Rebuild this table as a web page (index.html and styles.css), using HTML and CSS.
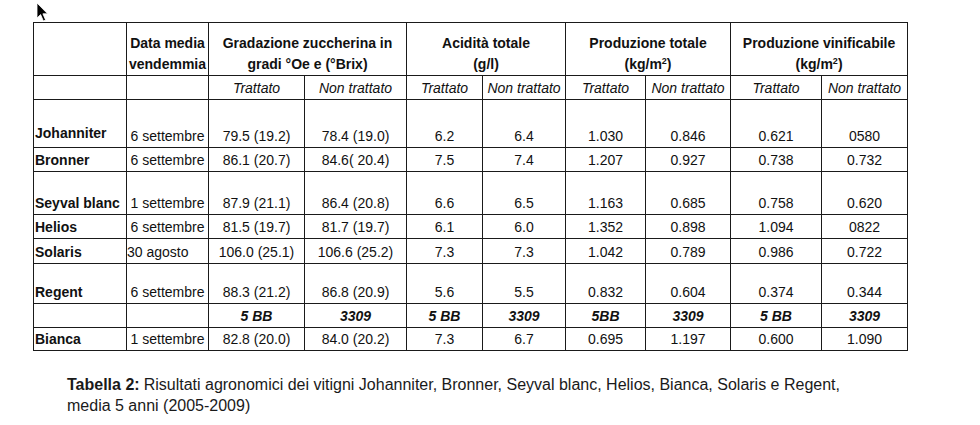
FILE: index.html
```html
<!DOCTYPE html>
<html lang="it">
<head>
<meta charset="utf-8">
<title>Tabella 2</title>
<link rel="stylesheet" href="styles.css">
</head>
<body>
<svg class="cursor" width="13" height="20" viewBox="0 0 13 20" aria-hidden="true">
  <path d="M1 1 L1 16 L4.6 12.6 L7.4 19 L9.6 18 L6.9 11.8 L11.6 11.8 Z" fill="#000" stroke="#fff" stroke-width="0.8"/>
</svg>
<table class="data">
  <colgroup>
    <col class="c-name"><col class="c-date"><col class="c-g1"><col class="c-g2"><col class="c-a1"><col class="c-a2"><col class="c-p1"><col class="c-p2"><col class="c-v1"><col class="c-v2">
  </colgroup>
  <tr class="r-head">
    <th></th>
    <th>Data media<br>vendemmia</th>
    <th colspan="2">Gradazione zuccherina in<br>gradi °Oe e (°Brix)</th>
    <th colspan="2">Acidità totale<br>(g/l)</th>
    <th colspan="2">Produzione totale<br>(kg/m<sup>2</sup>)</th>
    <th colspan="2">Produzione vinificabile<br>(kg/m<sup>2</sup>)</th>
  </tr>
  <tr class="r-sub">
    <td></td><td></td>
    <td class="it">Trattato</td><td class="it">Non trattato</td>
    <td class="it">Trattato</td><td class="it">Non trattato</td>
    <td class="it">Trattato</td><td class="it">Non trattato</td>
    <td class="it">Trattato</td><td class="it">Non trattato</td>
  </tr>
  <tr class="r-johanniter">
    <td class="name raised">Johanniter</td><td>6 settembre</td><td>79.5 (19.2)</td><td>78.4 (19.0)</td><td>6.2</td><td>6.4</td><td>1.030</td><td>0.846</td><td>0.621</td><td>0580</td>
  </tr>
  <tr class="r-bronner">
    <td class="name">Bronner</td><td>6 settembre</td><td>86.1 (20.7)</td><td>84.6( 20.4)</td><td>7.5</td><td>7.4</td><td>1.207</td><td>0.927</td><td>0.738</td><td>0.732</td>
  </tr>
  <tr class="r-seyval">
    <td class="name">Seyval blanc</td><td>1 settembre</td><td>87.9 (21.1)</td><td>86.4 (20.8)</td><td>6.6</td><td>6.5</td><td>1.163</td><td>0.685</td><td>0.758</td><td>0.620</td>
  </tr>
  <tr class="r-helios">
    <td class="name">Helios</td><td>6 settembre</td><td>81.5 (19.7)</td><td>81.7 (19.7)</td><td>6.1</td><td>6.0</td><td>1.352</td><td>0.898</td><td>1.094</td><td>0822</td>
  </tr>
  <tr class="r-solaris">
    <td class="name">Solaris</td><td class="left">30 agosto</td><td>106.0 (25.1)</td><td>106.6 (25.2)</td><td>7.3</td><td>7.3</td><td>1.042</td><td>0.789</td><td>0.986</td><td>0.722</td>
  </tr>
  <tr class="r-regent">
    <td class="name">Regent</td><td>6 settembre</td><td>88.3 (21.2)</td><td>86.8 (20.9)</td><td>5.6</td><td>5.5</td><td>0.832</td><td>0.604</td><td>0.374</td><td>0.344</td>
  </tr>
  <tr class="r-root">
    <td></td><td></td><td class="bi">5 BB</td><td class="bi">3309</td><td class="bi">5 BB</td><td class="bi">3309</td><td class="bi">5BB</td><td class="bi">3309</td><td class="bi">5 BB</td><td class="bi">3309</td>
  </tr>
  <tr class="r-bianca">
    <td class="name">Bianca</td><td>1 settembre</td><td>82.8 (20.0)</td><td>84.0 (20.2)</td><td>7.3</td><td>6.7</td><td>0.695</td><td>1.197</td><td>0.600</td><td>1.090</td>
  </tr>
</table>
<p class="caption"><span class="cap-line"><strong class="cap-label">Tabella 2:</strong><span>Risultati agronomici dei vitigni Johanniter, Bronner, Seyval blanc, Helios, Bianca, Solaris e Regent,</span></span><span class="cap-line">media 5 anni (2005-2009)</span></p>
</body>
</html>
```
FILE: styles.css
```css
html, body {
  margin: 0;
  padding: 0;
  background: #fff;
}
body {
  font-family: "Liberation Sans", Arial, sans-serif;
  color: #111;
  position: relative;
  width: 980px;
  height: 425px;
  overflow: hidden;
}
.cursor {
  position: absolute;
  left: 36px;
  top: 2px;
}
.data {
  border-collapse: collapse;
  table-layout: fixed;
  width: 874px;
  margin: 22px 0 0 33px;
  font-size: 14px;
}
.c-name { width: 93px; }
.c-date { width: 82px; }
.c-g1 { width: 96px; }
.c-g2 { width: 102px; }
.c-a1 { width: 76px; }
.c-a2 { width: 83px; }
.c-p1 { width: 80px; }
.c-p2 { width: 85px; }
.c-v1 { width: 91px; }
.c-v2 { width: 86px; }
.data th, .data td {
  border: 1px solid #1a1a1a;
  padding: 0 0 2px 0;
  text-align: center;
  vertical-align: bottom;
  line-height: 17px;
  white-space: nowrap;
  overflow: hidden;
}
.data th {
  font-weight: bold;
  line-height: 21px;
  padding-bottom: 0;
}
.data sup {
  font-size: 9px;
  line-height: 0;
  vertical-align: 5px;
}
.data td.name {
  text-align: left;
  font-weight: bold;
  padding-left: 1px;
}
.data td.raised {
  padding-bottom: 5px;
}
.data td.left {
  text-align: left;
  padding-left: 0;
}
.data td.it {
  font-style: italic;
  padding-bottom: 2px;
}
.data td.bi {
  font-style: italic;
  font-weight: bold;
}
.r-head { height: 53px; }
.r-sub { height: 24px; }
.r-johanniter { height: 48px; }
.r-bronner { height: 24px; }
.r-seyval { height: 43px; }
.r-helios { height: 24px; }
.r-solaris { height: 25px; }
.r-regent { height: 40px; }
.r-root { height: 24px; }
.r-bianca { height: 23px; }
.caption {
  margin: 23px 0 0 67px;
  width: 790px;
  font-size: 16px;
  line-height: 21px;
  color: #1a1a1a;
}
.cap-line {
  display: flex;
  white-space: nowrap;
}
.cap-label {
  font-weight: bold;
  margin-right: 4px;
}
```
